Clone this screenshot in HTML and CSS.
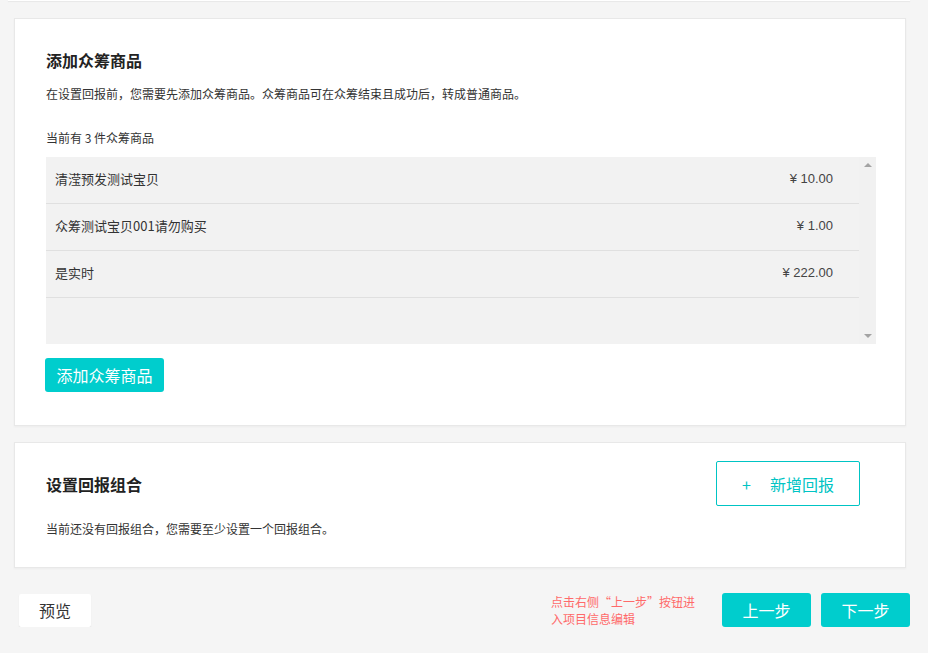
FILE: index.html
```html
<!DOCTYPE html>
<html lang="zh-CN">
<head>
  <meta charset="UTF-8" />
  <meta name="viewport" content="width=device-width, initial-scale=1" />
  <title>设置回报 - 众筹</title>
  <link rel="stylesheet" href="styles.css">
</head>
<body>
  <div class="prev-card"></div>

  <div class="card goods-card">
    <h3 class="card-title">添加众筹商品</h3>
    <p class="desc">在设置回报前，您需要先添加众筹商品。众筹商品可在众筹结束且成功后，转成普通商品。</p>
    <p class="count">当前有 3 件众筹商品</p>

    <div class="goods-list">
      <div class="goods-rows">
        <div class="goods-row">
          <span class="goods-name">清滢预发测试宝贝</span>
          <span class="goods-price">¥ 10.00</span>
        </div>
        <div class="goods-row">
          <span class="goods-name">众筹测试宝贝001请勿购买</span>
          <span class="goods-price">¥ 1.00</span>
        </div>
        <div class="goods-row">
          <span class="goods-name">是实时</span>
          <span class="goods-price">¥ 222.00</span>
        </div>
        <div class="goods-row"></div>
      </div>
      <div class="scrollbar">
        <span class="arrow-up"></span>
        <span class="arrow-down"></span>
      </div>
    </div>

    <button class="btn btn-primary add-goods">添加众筹商品</button>
  </div>

  <div class="card reward-card">
    <div class="reward-head">
      <h3 class="card-title">设置回报组合</h3>
      <button class="btn btn-outline"><span class="plus">+</span>新增回报</button>
    </div>
    <p class="desc">当前还没有回报组合，您需要至少设置一个回报组合。</p>
  </div>

  <div class="footer">
    <button class="btn btn-preview">预览</button>
    <div class="footer-right">
      <p class="hint">点击右侧“上一步”按钮进入项目信息编辑</p>
      <button class="btn btn-primary step">上一步</button>
      <button class="btn btn-primary step">下一步</button>
    </div>
  </div>
</body>
</html>
```

FILE: styles.css
```css
body {
  margin: 0;
  padding: 0 22px 0 14px;
  background: #f5f5f5;
  font-family: "Noto Sans CJK SC", "Liberation Sans", sans-serif;
  color: #333;
}
p, h3 {
  margin: 0;
}
.prev-card {
  height: 1px;
  margin: 0 -4px 0 -6px;
  background: #fff;
  box-shadow: 0 1px 1px #e6e6e6;
}
.card {
  background: #fff;
  border: 1px solid #e8e8e8;
  box-shadow: 0 1px 2px rgba(0, 0, 0, 0.04);
}
.goods-card {
  margin-top: 17px;
  padding: 30px 29px 33px 31px;
}
.card-title {
  font-size: 16px;
  line-height: 22px;
  font-weight: bold;
  color: #222;
}
.desc {
  font-size: 12px;
  line-height: 20px;
  margin-top: 13px;
}
.count {
  font-size: 12px;
  line-height: 20px;
  margin-top: 24px;
}
.goods-list {
  display: flex;
  margin-top: 9px;
  background: #f2f2f2;
  height: 187px;
}
.goods-rows {
  flex: 1;
}
.goods-row {
  display: flex;
  justify-content: space-between;
  align-items: center;
  box-sizing: border-box;
  height: 47px;
  padding: 0 26px 3px 9px;
  border-bottom: 1px solid #e0e0e0;
  font-size: 13px;
  line-height: 18px;
}
.goods-row:last-child {
  border-bottom: none;
  height: 46px;
}
.goods-price {
  font-family: "Liberation Sans", Arial, sans-serif;
  font-size: 13px;
  color: #444;
}
.scrollbar {
  width: 17px;
  background: #f1f1f1;
  display: flex;
  flex-direction: column;
  justify-content: space-between;
  align-items: center;
  padding: 6px 0;
  box-sizing: border-box;
}
.arrow-up, .arrow-down {
  width: 0;
  height: 0;
  border-left: 4px solid transparent;
  border-right: 4px solid transparent;
}
.arrow-up {
  border-bottom: 4px solid #a3a3a3;
}
.arrow-down {
  border-top: 4px solid #a3a3a3;
}
.btn {
  font-family: "Noto Sans CJK SC", sans-serif;
  border: none;
  border-radius: 3px;
  cursor: pointer;
}
.btn-primary {
  background: #00cdcd;
  color: #fff;
  font-size: 16px;
  height: 34px;
}
.add-goods {
  margin-top: 14px;
  padding: 0 11px;
  width: 119px;
  margin-left: -1px;
}
.reward-card {
  margin-top: 16px;
  padding: 18px 45px 28px 31px;
}
.reward-head {
  display: flex;
  justify-content: space-between;
  align-items: center;
}
.reward-card .desc {
  margin-top: 13px;
}
.btn-outline {
  background: #fff;
  border: 1px solid #00c4c4;
  border-radius: 2px;
  color: #00c4c4;
  font-size: 16px;
  width: 144px;
  height: 45px;
}
.plus {
  margin-right: 19px;
}
.footer {
  display: flex;
  justify-content: space-between;
  align-items: center;
  margin: 25px -4px 0 5px;
}
.btn-preview {
  width: 72px;
  height: 33px;
  background: #fff;
  color: #333;
  font-size: 16px;
  border-radius: 2px;
  box-shadow: 0 1px 1px #dcdcdc;
}
.footer-right {
  display: flex;
  align-items: center;
}
.hint {
  width: 146px;
  font-size: 12px;
  line-height: 17px;
  color: #ff6a6a;
  margin-right: 25px;
}
.step {
  width: 89px;
  margin-left: 10px;
}
.hint + .step {
  margin-left: 0;
}
```
